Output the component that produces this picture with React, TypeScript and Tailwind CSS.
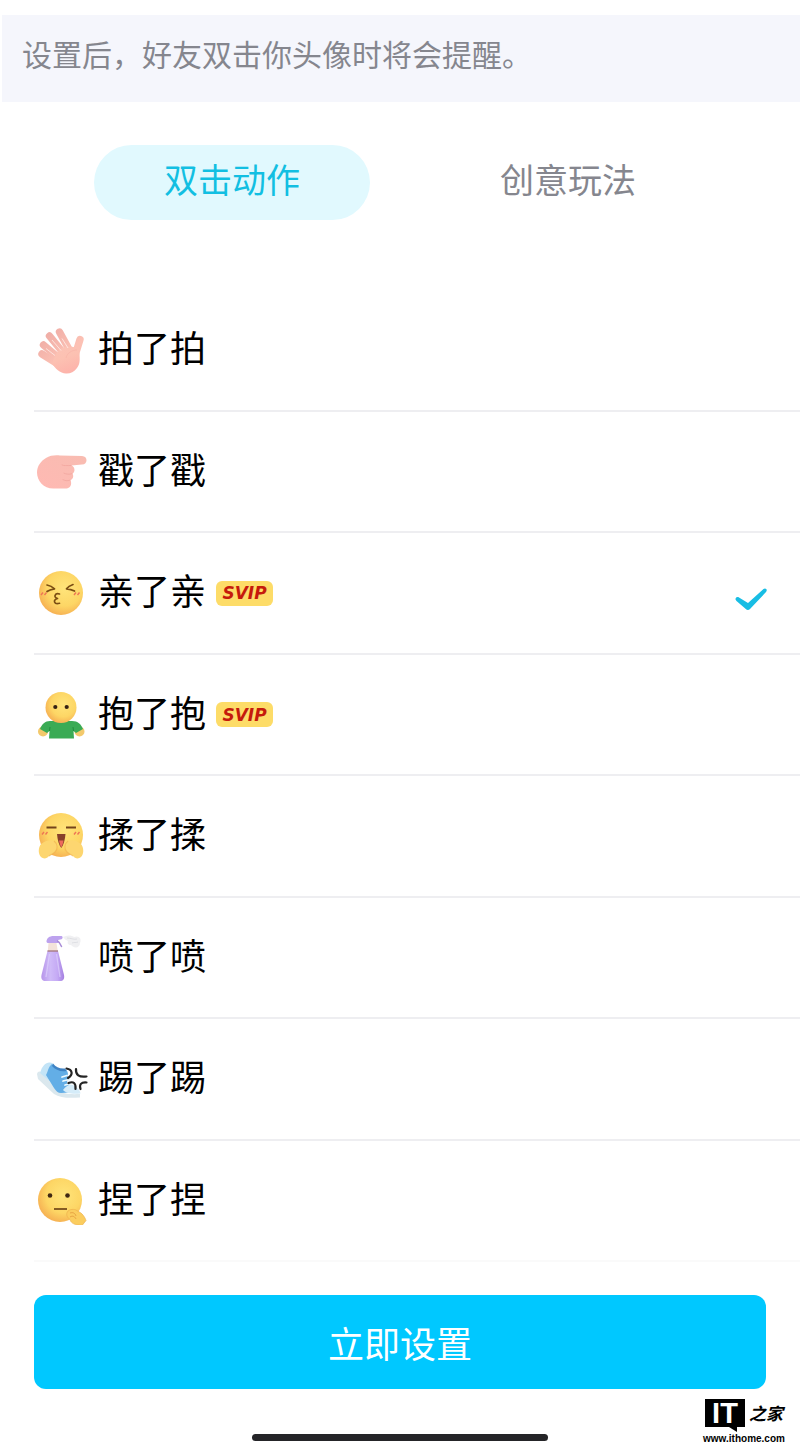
import { useState, type ReactNode } from "react";

function PatIcon() {
  return (
    <svg viewBox="0 0 48 48" className="size-12" aria-hidden="true">
      <defs>
        <linearGradient id="pat" x1="0" y1="0" x2="0.4" y2="1">
          <stop offset="0" stopColor="#fbc3b6" />
          <stop offset="0.5" stopColor="#fcc1b2" />
          <stop offset="1" stopColor="#fdb4ab" />
        </linearGradient>
        <linearGradient id="pat-finger" gradientUnits="userSpaceOnUse" x1="8" y1="8" x2="30" y2="32">
          <stop offset="0" stopColor="#efada6" />
          <stop offset="0.9" stopColor="#fcc1b4" />
        </linearGradient>
      </defs>
      <g strokeWidth="7.4" strokeLinecap="round" fill="none" stroke="url(#pat-finger)">
        <path d="M43 13.500 37 33" />
        <path d="M22.500 6 34 27" />
        <path d="M12.500 10 28 29" />
        <path d="M6.500 19 23 33" />
        <path d="M5 28 21 38" />
      </g>
      <path
        d="M19 28c3-5 8-8 14-7 5-1 9 2 9.500 7 .4 6 .5 10-2.500 14-3 4-7 5.800-11 5.500-6-.5-11-5-14-10Z"
        fill="url(#pat)"
      />
      <path
        d="M9 22.500 18 29.500M15 14 24 24.500M25 12.500 31 22"
        stroke="#fff3f0"
        strokeWidth="1"
        fill="none"
        opacity="0.7"
      />
      <path d="M40 24c-5 0-10 3-11 8" stroke="#f4a9a0" strokeWidth="1" fill="none" opacity="0.4" />
    </svg>
  );
}

function PokeIcon() {
  return (
    <svg viewBox="0 0 50 48" className="h-12 w-[50px]" aria-hidden="true">
      <defs>
        <linearGradient id="poke" x1="0" y1="1" x2="1" y2="0">
          <stop offset="0" stopColor="#ffb9b3" />
          <stop offset="1" stopColor="#f8bcb1" />
        </linearGradient>
      </defs>
      <path
        d="M9 10C13 7.500 18 7 23 7.500L45 8c6 .2 6 8.200 0 8.600l-10.500 1c3.500 1.500 4 6 1 8 1.500 3 .5 5.500-2 6.500 2 5-1 8.500-5 8.500H17C7 41 0 33 0 24.500 0 18 4 13 9 10Z"
        fill="url(#poke)"
      />
      <path
        d="M34 17.500c-4 0-7 .5-9-.5M35 25.700c-3 1-6 .5-8-.5M33 32.200c-3 1-5 .5-7-.5"
        stroke="#efa39b"
        strokeWidth="1"
        fill="none"
        strokeLinecap="round"
        opacity="0.7"
      />
    </svg>
  );
}

function FaceGradient({ id }: { id: string }) {
  return (
    <defs>
      <radialGradient id={id} cx="0.58" cy="0.4" r="0.66">
        <stop offset="0" stopColor="#ffe47a" />
        <stop offset="0.6" stopColor="#fdd665" />
        <stop offset="1" stopColor="#f5ab50" />
      </radialGradient>
    </defs>
  );
}

function KissIcon() {
  return (
    <svg viewBox="0 0 48 48" className="size-12" aria-hidden="true">
      <FaceGradient id="kiss" />
      <circle cx="24" cy="24" r="22" fill="url(#kiss)" />
      <g fill="none" stroke="#7b4d13" strokeWidth="1.700" strokeLinecap="round" strokeLinejoin="round">
        <path d="M10 16c3 .5 5.500 1.800 7.500 3.800-2.500.4-5.500 1.200-7.500 2.700" />
        <path d="M36 15.500c-2.500.8-5 2.200-6.500 4.300 2.500.2 5.500.9 8 2.200" />
        <path d="M22.500 25c-4.500-1.500-6.500 3.500-2 4.500-5 1-3.500 6.500 2 4.800" />
      </g>
      <path d="M4 26l2-2.500M7.500 26l2-2.500M37 26l2-2.500M40.500 26l2-2.500" stroke="#ee7655" strokeWidth="1.400" />
    </svg>
  );
}

function HugIcon() {
  return (
    <svg viewBox="0 0 48 48" className="size-12" aria-hidden="true">
      <FaceGradient id="hug" />
      <circle cx="6" cy="40.500" r="5" fill="#f3c96c" />
      <circle cx="42.500" cy="40.500" r="5" fill="#f3c96c" />
      <path
        d="M13 30h22c6 0 9 3 11 8l-7 4-2.500-2 .5 7.500H12l.5-7.500-2.500 2-7-4C5 33 8 30 13 30Z"
        fill="#3aab55"
      />
      <path d="M12.500 40l.5-4M36.500 40l-.5-4" stroke="#218f3d" strokeWidth="1" />
      <ellipse cx="24" cy="16.500" rx="15.500" ry="15.500" fill="url(#hug)" />
      <circle cx="18.300" cy="16" r="2.100" fill="#352113" />
      <circle cx="29.700" cy="16" r="2.100" fill="#352113" />
    </svg>
  );
}

function RubIcon() {
  return (
    <svg viewBox="0 0 48 48" className="size-12" aria-hidden="true">
      <FaceGradient id="rub" />
      <circle cx="24" cy="23" r="22" fill="url(#rub)" />
      <path
        d="M4 32c4-3 9-5 13-3 4 2 4 8 1 11-2 2-5 3-6 4-2 3-6 3-8 1-3-3-3-9 0-13ZM44 32c-4-3-9-5-13-3-4 2-4 8-1 11 2 2 5 3 6 4 2 3 6 3 8 1 3-3 3-9 0-13Z"
        fill="#fdd670"
      />
      <path
        d="M17 29c4 3 4 8 1 11-2 2-5 3-6 4M31 29c-4 3-4 8-1 11 2 2 5 3 6 4"
        stroke="#f0b04e"
        strokeWidth="1.100"
        fill="none"
        opacity="0.65"
      />
      <path d="M9.500 15.500h10M29 15.500h10" stroke="#73431a" strokeWidth="1.800" />
      <path d="M20 22h8.500c-.5 6-2 11-4.200 14-2.400-3-3.800-8-4.300-14Z" fill="#87402a" />
      <path d="M22 28.500h4.600c-.5 3-1.300 5-2.300 7-1-2-1.800-4-2.300-7Z" fill="#ee6b5c" />
      <path d="M5 22.500l2-2.500M8.500 22.500l2-2.500M37 22.500l2-2.500M40.500 22.500l2-2.500" stroke="#ee7655" strokeWidth="1.400" />
    </svg>
  );
}

function SprayIcon() {
  return (
    <svg viewBox="0 0 48 48" className="size-12" aria-hidden="true">
      <defs>
        <linearGradient id="spray" x1="0" y1="0" x2="1" y2="0">
          <stop offset="0" stopColor="#b795ea" />
          <stop offset="0.4" stopColor="#cfbaf8" />
          <stop offset="0.7" stopColor="#c5aaf5" />
          <stop offset="1" stopColor="#a47fe0" />
        </linearGradient>
      </defs>
      <path
        d="M26 3c4-2 8-2 11 0 5-2 8 2 6 6 0 5-6 6-9 2-3 0-4-2-3-4-2-1-4-2-5-4Z"
        fill="#ececef"
        opacity="0.8"
      />
      <path d="M30 4c4 0 7 2 10 1M35 9c2-1 4 0 6-1" stroke="#d9dadf" strokeWidth="0.800" fill="none" />
      <path d="M10.500 17h10.500l6 24c.8 4-1 6-4 6H8.500c-3 0-4.800-2-4-6Z" fill="url(#spray)" />
      <path d="M12.500 20 9 43M19.500 20l3.500 23" stroke="#ddd0fc" strokeWidth="1.400" opacity="0.7" />
      <path d="M11.500 9h8l1.200 8H10.800Z" fill="#f3e3da" />
      <path d="M10.500 17h10.500" stroke="#a67a82" strokeWidth="1.400" />
      <path d="M9.500 8c0-4 3-6 7-6h8c1.500 0 1.500 3 0 3.200L21 6v3H10.500Z" fill="#bda2ee" />
      <path d="M20.500 7c2 1 3 3 4 5.500" stroke="#a88bd7" strokeWidth="1.500" fill="none" strokeLinecap="round" />
    </svg>
  );
}

function KickIcon() {
  return (
    <svg viewBox="0 0 52 48" className="h-12 w-[52px]" aria-hidden="true">
      <path d="M0 19c1-3 3-3 5-1l16 17c5 4 12 4.500 22 4v3.500c-11 .8-20 .5-26-3.500L1 24Z" fill="#dbe8ee" />
      <path d="M3 18C5 11 9 7 13 7.500c4 .5 5 3 4 7l-4 12Z" fill="#c3e4f7" />
      <path
        d="M9 20c2-3 2-8 6-11 3 4 8 6 13 5 2 1 3 3 3 6l-1 8c5 3 9 5 11 9l-17 1c-3 0-5-2-7-5Z"
        fill="#63aee6"
      />
      <path d="M16 8.500c3 4 7 5.500 12 5l1.500 2.500c-6 1-11-1-14.500-5Z" fill="#3f83c4" />
      <path d="M26 35c3-4 6-6 10-5 4 2 7 5 7.500 8.500-7 .5-14 .5-17.500-3.500Z" fill="#d5ecf9" />
      <path d="m25 22 5-1.500M26 26l6-1.500M28 30l6-1.500" stroke="#effbff" strokeWidth="1.800" strokeLinecap="round" />
      <g fill="none" stroke="#242424" strokeWidth="2.200" strokeLinecap="round">
        <path d="M29.500 13.500c6 1 7 6 1.500 9.500" />
        <path d="M39 14c-.5 6 3 8.500 10.500 7.500" />
        <path d="M31.500 28c5-2 7.500 0 7 6" />
        <path d="M49.500 27.500c-5.500-.5-7.500 2-6 6.500" />
      </g>
    </svg>
  );
}

function PinchIcon() {
  return (
    <svg viewBox="0 0 50 48" className="h-12 w-[50px]" aria-hidden="true">
      <FaceGradient id="pinch" />
      <circle cx="23" cy="23" r="22" fill="url(#pinch)" />
      <circle cx="13" cy="18.500" r="2.300" fill="#402813" />
      <circle cx="30.500" cy="18.500" r="2.300" fill="#402813" />
      <path d="M17 32h13" stroke="#704617" strokeWidth="1.700" />
      <path
        d="M31 34c3-2.500 8-2 10 .5 4 1 7 6 8 9l-4 5c-7-.5-11-2-12-6-3-2-4.500-5.500-2-8.500Z"
        fill="#fbcd5e"
        stroke="#eeb04c"
        strokeWidth="0.700"
      />
      <path d="M33 36c3-1 5 0 6 3M33 40c3-2 5 0 6 2" stroke="#e8a443" fill="none" />
    </svg>
  );
}

interface Action {
  name: string;
  icon: ReactNode;
  svip?: boolean;
}

const actions: Action[] = [
  { name: "拍了拍", icon: <PatIcon /> },
  { name: "戳了戳", icon: <PokeIcon /> },
  { name: "亲了亲", icon: <KissIcon />, svip: true },
  { name: "抱了抱", icon: <HugIcon />, svip: true },
  { name: "揉了揉", icon: <RubIcon /> },
  { name: "喷了喷", icon: <SprayIcon /> },
  { name: "踢了踢", icon: <KickIcon /> },
  { name: "捏了捏", icon: <PinchIcon /> },
];

function SvipBadge() {
  return (
    <span className="ml-[10px] flex h-[25px] w-[57px] items-center justify-center rounded-md bg-[#fddc68] font-['DejaVu_Sans',sans-serif] text-[17px] leading-6 font-bold text-[#c51a0c] italic">
      SVIP
    </span>
  );
}

function Watermark() {
  return (
    <div className="absolute right-4 bottom-2 flex w-20 flex-col items-center">
      <div className="flex h-8 w-full items-start gap-1 pl-px">
        <span className="relative flex h-7 w-10 shrink-0 items-center justify-center bg-black font-['Liberation_Sans',sans-serif] text-[29px] leading-7 font-bold text-white">
          IT
          <svg viewBox="0 0 8 5" className="absolute top-full right-2 h-[5px] w-2" aria-hidden="true">
            <path d="M0 0h8v5Z" fill="#000" />
          </svg>
        </span>
        <span className="shrink-0 text-[17px] leading-7 font-bold text-black italic">之家</span>
      </div>
      <span className="font-['Liberation_Sans',sans-serif] text-[10px] leading-4 font-bold text-black">
        www.ithome.com
      </span>
    </div>
  );
}

export default function App() {
  const [tab, setTab] = useState(0);
  const [selected, setSelected] = useState("亲了亲");

  return (
    <div className="flex min-h-screen flex-col bg-white pt-[15px] font-['Noto_Sans_CJK_SC',sans-serif] font-normal">
      <header className="ml-[2px] h-[87px] bg-[#f5f6fc] pt-[18px] pl-5">
        <p className="text-[30px] leading-10 text-[#85868e]">设置后，好友双击你头像时将会提醒。</p>
      </header>

      <nav className="mt-[43px] grid grid-cols-2 gap-[60px] px-[94px]">
        {["双击动作", "创意玩法"].map((label, i) => (
          <button
            key={label}
            type="button"
            onClick={() => setTab(i)}
            className={
              tab === i
                ? "h-[75px] rounded-full bg-[#e1f9fe] pb-2 text-[34px] leading-10 text-[#12bfe2]"
                : "h-[75px] rounded-full pb-2 text-[34px] leading-10 text-[#85868e]"
            }
          >
            {label}
          </button>
        ))}
      </nav>

      <div role="radiogroup" aria-label="双击动作" className="mt-[70px] pl-[34px]">
        {actions.map((action) => (
          <label
            key={action.name}
            className="flex cursor-pointer items-center border-b-2 border-[#eeeef1] pl-[3px] last:border-[#fafafa] odd:h-[122px] even:h-[121px]"
          >
            <input
              type="radio"
              name="action"
              checked={selected === action.name}
              onChange={() => setSelected(action.name)}
              className="size-0 appearance-none"
            />
            <span className="flex w-[61px] shrink-0">{action.icon}</span>
            <span className="pb-2 text-4xl leading-[48px] text-black">{action.name}</span>
            {action.svip && <SvipBadge />}
            {selected === action.name && (
              <svg viewBox="0 0 34 24" className="mt-3 mr-8 ml-auto h-6 w-[34px]" aria-hidden="true">
                <path
                  d="M1.500 12.500c0-2.500 2-3 3.500-2L14 16 29.500 2c2-1.500 4.500.5 2.500 3L16 22c-1.200 1.200-3 1.200-4.200 0L2.500 14Z"
                  fill="#18bde4"
                />
              </svg>
            )}
          </label>
        ))}
      </div>

      <footer className="relative flex flex-1 flex-col items-center px-[34px] pt-[33px] pb-[14px]">
        <button
          type="button"
          className="h-[94px] w-full rounded-xl bg-[#00c8ff] text-4xl leading-[48px] text-white"
        >
          立即设置
        </button>
        <div className="mt-[45px] h-[7px] w-[296px] rounded-full bg-[#252528]" />
        <Watermark />
      </footer>
    </div>
  );
}
